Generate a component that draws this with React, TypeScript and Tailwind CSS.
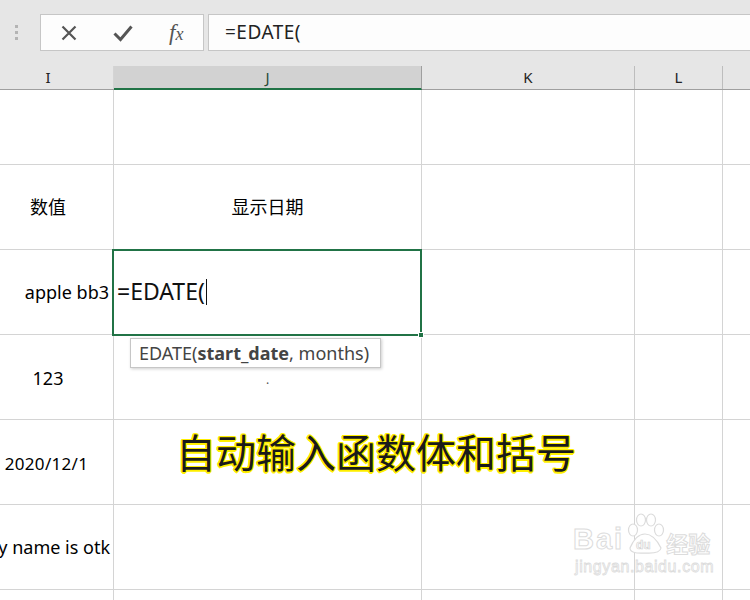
import React from "react";

const FONT = { fontFamily: '"Noto Sans", "Noto Sans CJK SC", sans-serif' };

const widths = ["w-[114px]", "w-[308px]", "w-[213px]", "w-[88px]", "flex-1"];

function Row({ h, cells }: { h: string; cells: React.ReactNode[] }) {
  return (
    <div className={`flex ${h} border-b border-[#d4d4d4]`}>
      {widths.map((w, i) => (
        <div
          key={i}
          className={`${w} ${i < 4 ? "border-r border-[#d4d4d4]" : ""} relative shrink-0 h-full`}
        >
          {cells[i]}
        </div>
      ))}
    </div>
  );
}

export default function App() {
  return (
    <div className="w-[750px] h-[600px] overflow-hidden bg-white relative text-black" style={FONT}>
      {/* toolbar */}
      <div className="h-[66px] bg-[#e6e6e6] flex items-start pt-[14px]">
        <div className="w-[40px] h-[36px] flex flex-col items-center justify-center gap-[3px] pr-[8px]">
          <div className="w-[3px] h-[3px] bg-[#b4b4b4]" />
          <div className="w-[3px] h-[3px] bg-[#b4b4b4]" />
          <div className="w-[3px] h-[3px] bg-[#b4b4b4]" />
        </div>
        <div className="w-[164px] h-[37px] bg-[#fdfdfd] border border-[#c6c6c6] flex items-center">
          <div className="w-[55px] flex justify-center pl-[1px]">
            <svg width="16" height="16" viewBox="0 0 16 16">
              <path d="M1.5 1.5 L14.5 14.5 M14.5 1.5 L1.5 14.5" stroke="#555" strokeWidth="2.2" fill="none" />
            </svg>
          </div>
          <div className="w-[54px] flex justify-center">
            <svg width="20" height="18" viewBox="0 0 20 18">
              <path d="M1.5 9.5 L7.5 15.5 L18.5 2.5" stroke="#555" strokeWidth="3" fill="none" />
            </svg>
          </div>
          <div className="w-[54px] flex justify-center">
            <span
              className="text-[23px] text-[#555] italic leading-none"
              style={{ fontFamily: '"Liberation Serif", serif' }}
            >
              f<span className="text-[18px]">x</span>
            </span>
          </div>
        </div>
        <div className="w-[4px]" />
        <div className="flex-1 h-[37px] bg-[#fdfdfd] border border-[#c6c6c6] border-r-0 flex items-center pl-[16px]">
          <span className="text-[19px] text-[#222] tracking-[0.5px]">=EDATE(</span>
        </div>
      </div>

      {/* header row */}
      <div className="flex h-[24px] bg-[#e6e6e6] border-b border-[#9f9f9f] text-[15px] text-[#222]">
        <div className="w-[114px] border-r border-[#d4d4d4] flex items-center justify-center pr-[17px]">I</div>
        <div className="w-[308px] bg-[#d2d2d2] border-r border-[#9f9f9f] border-b-2 border-b-[#217346] -mb-[1px] flex items-center justify-center text-[#2a4a38] pt-[1px]">
          J
        </div>
        <div className="w-[213px] border-r border-[#bdbdbd] flex items-center justify-center">K</div>
        <div className="w-[88px] border-r border-[#bdbdbd] flex items-center justify-center">L</div>
        <div className="flex-1" />
      </div>

      {/* grid */}
      <div className="text-[18px]">
        <Row h="h-[75px]" cells={[]} />
        <Row
          h="h-[85px]"
          cells={[
            <div className="h-full flex items-center justify-center pr-[17px]">数值</div>,
            <div className="h-full flex items-center justify-center">显示日期</div>,
          ]}
        />
        <Row
          h="h-[85px]"
          cells={[
            <div className="h-full flex items-center justify-end pr-[4px]">apple bb3</div>,
            <div className="absolute -left-[2px] -top-[1px] w-[310px] h-[87px] border-2 border-[#217346] z-10 flex items-center pl-[3px]">
              <span className="text-[23px] text-[#111] leading-none -mt-[2px]">=EDATE(</span>
              <span className="w-[1px] h-[26px] bg-[#111] ml-[1px] -mt-[2px]" />
              <div className="absolute -right-[4px] -bottom-[4px] w-[6px] h-[6px] bg-[#217346] border border-white" />
            </div>,
          ]}
        />
        <Row
          h="h-[85px]"
          cells={[
            <div className="h-full flex items-center justify-center pr-[17px] pt-[2px]">123</div>,
            <div className="h-full flex items-center justify-center pt-[5px] text-[12px] text-[#555]">.</div>,
          ]}
        />
        <Row
          h="h-[85px]"
          cells={[
            <div className="h-full flex items-center justify-center pr-[20px] pt-[3px] text-[17px] tracking-[0.3px]">2020/12/1</div>,
          ]}
        />
        <Row
          h="h-[85px]"
          cells={[
            <div className="h-full flex items-center whitespace-nowrap">
              <span className="absolute right-[3px]">my name is otk</span>
            </div>,
          ]}
        />
        <Row h="h-[85px]" cells={[]} />
      </div>

      {/* tooltip */}
      <div className="absolute left-[130px] top-[338px] w-[251px] h-[30px] bg-white border border-[#c6c6c6] shadow-[1px_1px_3px_rgba(0,0,0,0.2)] z-20 flex items-center pl-[8px] text-[18px] text-[#444] whitespace-nowrap">
        EDATE(<b className="font-bold">start_date</b>, months)
      </div>

      {/* caption */}
      <div
        className="absolute left-[176px] top-[421px] text-[40px] font-normal text-[#1a1a1a] z-20 whitespace-nowrap"
        style={{
          fontFamily: '"Noto Sans CJK SC", sans-serif',
          textShadow:
            "1px 0 #ffee00, -1px 0 #ffee00, 0 1px #ffee00, 0 -1px #ffee00, 1px 1px #ffee00, -1px -1px #ffee00, 1px -1px #ffee00, -1px 1px #ffee00, 1.5px 0 #fff200, -1.5px 0 #fff200, 0 1.5px #fff200, 0 -1.5px #fff200",
        }}
      >
        自动输入函数体和括号
      </div>

      {/* watermark */}
      <div className="absolute left-[573px] top-[513px] z-20 flex flex-col items-start">
        <div className="flex items-end">
          <span
            className="text-[29px] font-bold leading-none text-white tracking-[2px] mb-[1px]"
            style={{ WebkitTextStroke: "1px #dcdcdc", fontFamily: '"Liberation Sans", sans-serif' }}
          >
            Bai
          </span>
          <svg width="42" height="42" viewBox="0 0 42 42">
            <g fill="white" stroke="#dcdcdc" strokeWidth="1.2">
              <ellipse cx="9" cy="17" rx="4.5" ry="6" />
              <ellipse cx="17" cy="7" rx="4.5" ry="6" />
              <ellipse cx="27" cy="7" rx="4.5" ry="6" />
              <ellipse cx="35" cy="17" rx="4.5" ry="6" />
              <path d="M6 35 Q12 21 21 21 Q30 21 37 35 Q36 41 21 40 Q6 41 6 35 Z" />
            </g>
            <text x="12" y="36" fontSize="12" fill="white" stroke="#d4d4d4" strokeWidth="0.7" fontFamily="Liberation Sans" fontWeight="bold">
              du
            </text>
          </svg>
          <span
            className="text-[22px] font-bold leading-none text-white mb-[2px]"
            style={{ WebkitTextStroke: "1px #dcdcdc", fontFamily: '"Noto Sans CJK SC", sans-serif' }}
          >
            经验
          </span>
        </div>
        <span
          className="text-[16px] leading-none text-white mt-[4px] pl-[2px] tracking-[0.6px]"
          style={{ WebkitTextStroke: "0.8px #dcdcdc", fontFamily: '"Liberation Sans", sans-serif' }}
        >
          jingyan.baidu.com
        </span>
      </div>
    </div>
  );
}
